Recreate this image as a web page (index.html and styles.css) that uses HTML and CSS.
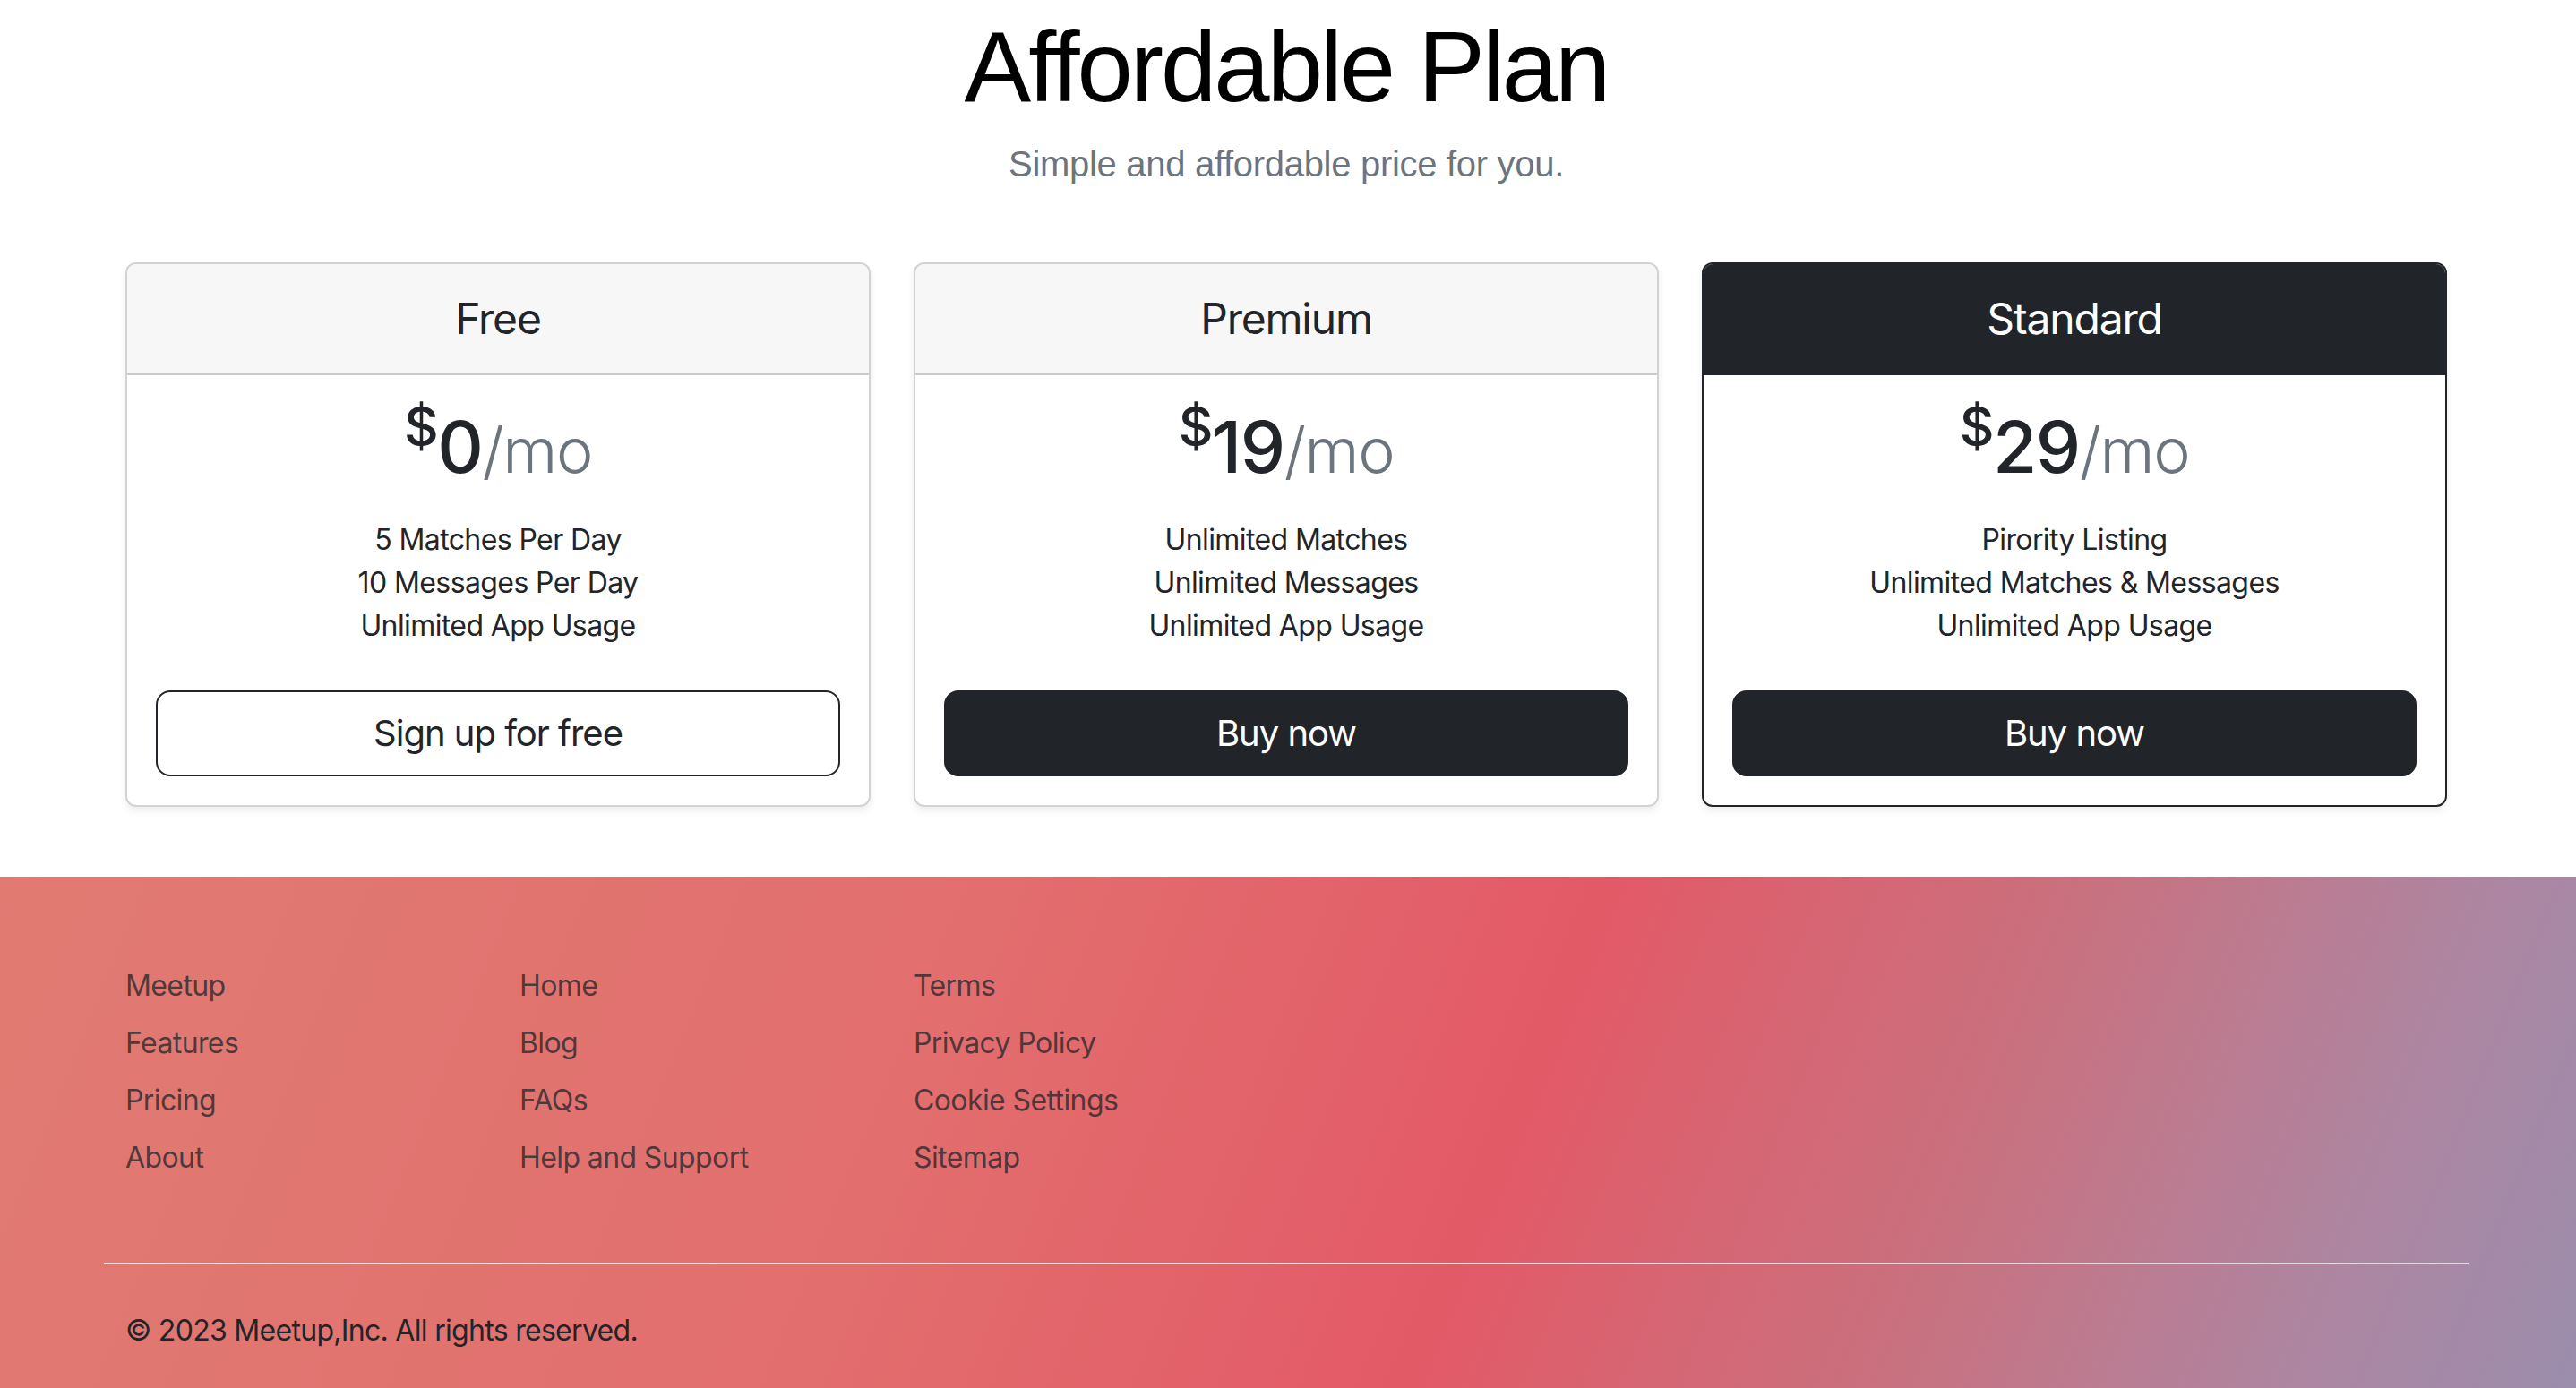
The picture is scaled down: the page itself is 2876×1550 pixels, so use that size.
FILE: index.html
```html
<!DOCTYPE html>
<html lang="en">
<head>
<meta charset="utf-8">
<title>Affordable Plan</title>
<link rel="stylesheet" href="styles.css">
</head>
<body>
<main class="container">
  <header class="pricing-header">
    <h1 class="display">Affordable Plan</h1>
    <p class="lead">Simple and affordable price for you.</p>
  </header>
  <div class="plans">
    <div class="card">
      <div class="card-header"><h4 class="plan-name">Free</h4></div>
      <div class="card-body">
        <h1 class="price"><sup>$</sup>0<small>/mo</small></h1>
        <ul class="features">
          <li>5 Matches Per Day</li>
          <li>10 Messages Per Day</li>
          <li>Unlimited App Usage</li>
        </ul>
        <button class="btn btn-outline">Sign up for free</button>
      </div>
    </div>
    <div class="card">
      <div class="card-header"><h4 class="plan-name">Premium</h4></div>
      <div class="card-body">
        <h1 class="price"><sup>$</sup>19<small>/mo</small></h1>
        <ul class="features">
          <li>Unlimited Matches</li>
          <li>Unlimited Messages</li>
          <li>Unlimited App Usage</li>
        </ul>
        <button class="btn btn-dark">Buy now</button>
      </div>
    </div>
    <div class="card card-dark">
      <div class="card-header"><h4 class="plan-name">Standard</h4></div>
      <div class="card-body">
        <h1 class="price"><sup>$</sup>29<small>/mo</small></h1>
        <ul class="features">
          <li>Pirority Listing</li>
          <li>Unlimited Matches &amp; Messages</li>
          <li>Unlimited App Usage</li>
        </ul>
        <button class="btn btn-dark">Buy now</button>
      </div>
    </div>
  </div>
</main>
<footer class="footer">
  <div class="footer-inner">
    <div class="footer-cols">
      <ul class="footer-list">
        <li><a href="#">Meetup</a></li>
        <li><a href="#">Features</a></li>
        <li><a href="#">Pricing</a></li>
        <li><a href="#">About</a></li>
      </ul>
      <ul class="footer-list">
        <li><a href="#">Home</a></li>
        <li><a href="#">Blog</a></li>
        <li><a href="#">FAQs</a></li>
        <li><a href="#">Help and Support</a></li>
      </ul>
      <ul class="footer-list">
        <li><a href="#">Terms</a></li>
        <li><a href="#">Privacy Policy</a></li>
        <li><a href="#">Cookie Settings</a></li>
        <li><a href="#">Sitemap</a></li>
      </ul>
    </div>
    <hr class="footer-rule">
    <p class="copyright">© 2023 Meetup,Inc. All rights reserved.</p>
  </div>
</footer>
</body>
</html>
```
FILE: styles.css
```css
* { box-sizing: border-box; }
html, body { margin: 0; padding: 0; }
body {
  font-family: Inter, "Liberation Sans", Arial, sans-serif;
  font-size: 32px;
  line-height: 1.5;
  color: #212529;
  background: #fff;
}
.container {
  width: 2640px;
  margin: 0 0 0 calc((100% - 2640px) / 2 - 2px);
  padding: 0 24px;
}
.pricing-header {
  text-align: center;
  padding-top: 8px;
}
.display {
  font-family: "Liberation Sans", Arial, sans-serif;
  font-size: 112px;
  font-weight: 400;
  line-height: 1.2;
  letter-spacing: -3px;
  color: #000;
  margin: 0;
}
.lead {
  font-family: "Liberation Sans", Arial, sans-serif;
  font-size: 40px;
  line-height: 60px;
  color: #6c757d;
  margin: 11px 0 0;
  letter-spacing: -0.3px;
}
.plans {
  display: grid;
  grid-template-columns: repeat(3, 1fr);
  gap: 48px;
  margin-top: 80px;
  text-align: center;
}
.card {
  border: 2px solid rgba(0, 0, 0, 0.175);
  border-radius: 12px;
  background: #fff;
  box-shadow: 0 4px 8px rgba(0, 0, 0, 0.075);
  overflow: hidden;
}
.card-header {
  background: #f7f7f7;
  border-bottom: 2px solid rgba(0, 0, 0, 0.175);
  padding: 32px;
}
.plan-name {
  margin: 0;
  font-size: 48px;
  font-weight: 400;
  line-height: 1.2;
  letter-spacing: -1.2px;
}
.card-dark { border-color: #212529; }
.card-dark .card-header {
  background: #212529;
  border-bottom-color: #212529;
  color: #fff;
}
.card-body { padding: 32px; }
.price {
  margin: 0 0 32px;
  font-size: 80px;
  font-weight: 500;
  line-height: 1.2;
  letter-spacing: -1.5px;
}
.price sup {
  position: relative;
  font-size: 0.75em;
  line-height: 0;
  vertical-align: baseline;
  top: -0.5em;
}
.price small {
  font-size: 0.875em;
  font-weight: 300;
  color: #6c757d;
}
.features {
  list-style: none;
  margin: 0 0 48px;
  padding: 0;
  line-height: 48px;
  letter-spacing: -0.6px;
}
.btn {
  display: block;
  width: 100%;
  font-family: inherit;
  font-size: 40px;
  line-height: 60px;
  padding: 16px 32px;
  border-radius: 16px;
  border: 2px solid #212529;
  letter-spacing: -1px;
  cursor: pointer;
}
.btn-outline { background: transparent; color: #212529; }
.btn-dark { background: #212529; color: #fff; }

.footer {
  margin-top: 78px;
  background: linear-gradient(112deg, #e07b72 0%, #e26f6e 35%, #e35a67 58%, #c9717f 75%, #ad86a2 90%, #9b8dac 100%);
  padding: 98px 0 40px;
}
.footer-inner {
  width: 2640px;
  margin: 0 0 0 calc((100% - 2640px) / 2 - 2px);
}
.footer-cols {
  display: grid;
  grid-template-columns: repeat(3, 440px);
  padding-left: 24px;
}
.footer-list {
  list-style: none;
  margin: 0;
  padding: 0;
  line-height: 48px;
}
.footer-list li { margin-bottom: 16px; }
.footer-list a {
  color: rgba(33, 37, 41, 0.75);
  text-decoration: none;
  letter-spacing: -0.6px;
}
.footer-rule {
  border: 0;
  height: 2px;
  background: #e2dcdf;
  margin: 77px 0 0;
}
.copyright {
  margin: 50px 0 0;
  padding-left: 24px;
  line-height: 48px;
  letter-spacing: -0.7px;
}
```
